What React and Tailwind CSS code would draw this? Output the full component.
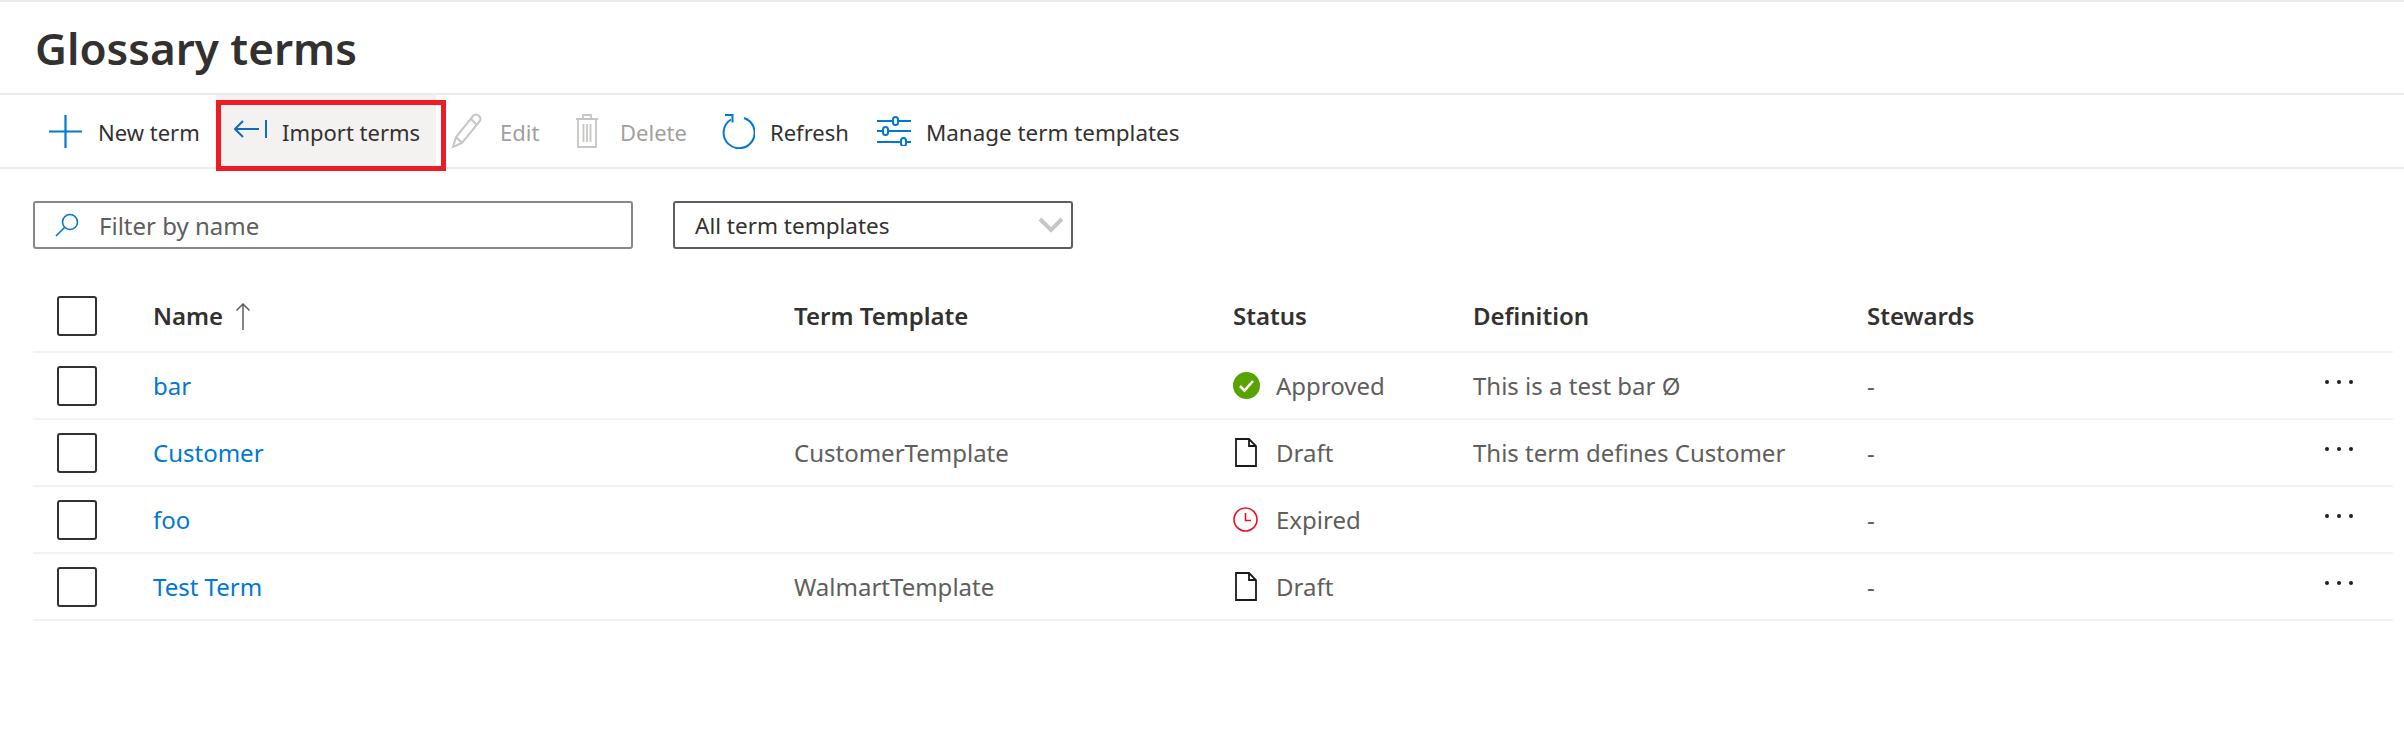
const rows = [
  { name: "bar", template: "", status: "Approved", definition: "This is a test bar Ø" },
  { name: "Customer", template: "CustomerTemplate", status: "Draft", definition: "This term defines Customer" },
  { name: "foo", template: "", status: "Expired", definition: "" },
  { name: "Test Term", template: "WalmartTemplate", status: "Draft", definition: "" },
];

const gridCols = "grid grid-cols-[120px_641px_439px_240px_394px_1fr_68px] items-center";

function PlusIcon() {
  return (
    <svg width="33" height="33" viewBox="0 0 33 33" fill="none" stroke="#0078d4" strokeWidth="2.2">
      <path d="M16.5 0v33M0 16.5h33" />
    </svg>
  );
}

function ImportIcon() {
  return (
    <svg width="33" height="22" viewBox="0 0 33 22" fill="none" stroke="#0f6cbd" strokeWidth="2" className="mb-1">
      <path d="M1 11h24M9 3l-8 8 8 8M32 2v18" />
    </svg>
  );
}

function PencilIcon() {
  return (
    <svg width="31" height="36" viewBox="0 0 31 36" fill="none" stroke="#c8c6c4" strokeWidth="2">
      <path d="M2 34l3-10L22 3c2-2 4-2 6 0s2 4 0 6L11 30z" />
      <path d="M5 24l6 6M20 6l6 6" />
    </svg>
  );
}

function TrashIcon() {
  return (
    <svg width="24" height="36" viewBox="0 0 24 36" fill="none" stroke="#c8c6c4" strokeWidth="1.8">
      <path d="M1 6h22M8 6V2h8v4M3 6v28h18V6M8.5 11v18M12 11v18M15.500 11v18" />
    </svg>
  );
}

function RefreshIcon() {
  return (
    <svg width="33" height="36" viewBox="0 0 33 36" fill="none" stroke="#0078d4" strokeWidth="2">
      <path d="M9 6.500A15.500 15.500 0 1 0 22 5" />
      <path d="M3 2h7.500v7.500" />
    </svg>
  );
}

function SlidersIcon() {
  return (
    <svg width="34" height="30" viewBox="0 0 34 30" fill="none" stroke="#0078d4" strokeWidth="2">
      <path d="M0 5h34M0 15h34M0 26h34" />
      <rect x="16" y="1" width="5" height="8" rx="2.500" fill="white" />
      <rect x="6" y="11" width="5" height="8" rx="2.500" fill="white" />
      <rect x="24" y="22" width="5" height="8" rx="2.500" fill="white" />
    </svg>
  );
}

function SearchIcon() {
  return (
    <svg width="24" height="24" viewBox="0 0 24 24" fill="none" stroke="#0078d4" strokeWidth="1.6">
      <circle cx="15" cy="9" r="7.500" />
      <path d="M9.500 14.500L1 23" />
    </svg>
  );
}

function ChevronIcon() {
  return (
    <svg width="26" height="16" viewBox="0 0 26 16" fill="none" stroke="#c8c6c4" strokeWidth="4">
      <path d="M2 2l11 11L24 2" />
    </svg>
  );
}

function SortIcon() {
  return (
    <svg width="16" height="27" viewBox="0 0 16 27" fill="none" stroke="#605e5c" strokeWidth="1.500">
      <path d="M8 1v26M1.500 7.500L8 1l6.500 6.500" />
    </svg>
  );
}

function StatusIcon({ status }) {
  if (status === "Approved") {
    return (
      <svg width="27" height="27" viewBox="0 0 27 27">
        <circle cx="13.500" cy="13.500" r="13.500" fill="#57a300" />
        <path d="M7 14l4.500 4.500L20 9" fill="none" stroke="white" strokeWidth="2.600" />
      </svg>
    );
  }
  if (status === "Expired") {
    return (
      <svg width="25" height="25" viewBox="0 0 25 25" fill="none" stroke="#e81123" strokeWidth="1.600">
        <circle cx="12.500" cy="12.500" r="11.500" />
        <path d="M12.500 6v7.500H18" />
      </svg>
    );
  }
  return (
    <svg width="22" height="29" viewBox="0 0 22 29" fill="none" stroke="#1b1a19" strokeWidth="1.800" className="ml-0.5">
      <path d="M1 1h13l7 7v20H1zM14 1v7h7" />
    </svg>
  );
}

function Checkbox() {
  return <div className="w-10 h-10 rounded-[3px] border-2 border-[#323130] bg-white"></div>;
}

function MoreDots() {
  return (
    <div className="flex gap-2 pb-2">
      <span className="w-1 h-1 rounded-full bg-[#201f1e]"></span>
      <span className="w-1 h-1 rounded-full bg-[#201f1e]"></span>
      <span className="w-1 h-1 rounded-full bg-[#201f1e]"></span>
    </div>
  );
}

function ToolButton({ icon, label, disabled, className }) {
  return (
    <div className={`flex items-center h-full whitespace-nowrap ${disabled ? "text-[#a19f9d]" : "text-[#323130]"} ${className}`}>
      {icon}
      <span className="pt-[3px]">{label}</span>
    </div>
  );
}

function App() {
  return (
    <div className="w-full h-[730px] bg-white border-t-2 border-[#edebe9] text-[24px] font-['Noto_Sans','Open_Sans',sans-serif]">
      {/* Title */}
      <div className="h-[91px] pl-[35px] flex items-center">
        <h1 className="text-[44px] font-semibold text-[#323130] leading-none">Glossary terms</h1>
      </div>

      {/* Toolbar */}
      <div className="h-[76px] pl-[33px] flex items-center border-y-2 border-[#edebe9] text-[22px]">
        <ToolButton icon={<PlusIcon />} label="New term" className="w-[183px] pl-4 gap-[16px]" />
        <div className="relative h-full w-[220px] bg-[#f3f2f1] pl-[18px] flex items-center gap-[15px] whitespace-nowrap text-[#323130]">
          <ImportIcon />
          <span className="pt-[3px]">Import terms</span>
          <div className="absolute left-0 top-[5px] w-[230px] h-[71px] border-[5px] border-[#ed1c24]"></div>
        </div>
        <ToolButton icon={<PencilIcon />} label="Edit" disabled className="w-[124px] ml-[15px] gap-[18px]" />
        <ToolButton icon={<TrashIcon />} label="Delete" disabled className="w-[147px] gap-[21px]" />
        <ToolButton icon={<RefreshIcon />} label="Refresh" className="w-[155px] gap-[15px]" />
        <ToolButton icon={<SlidersIcon />} label="Manage term templates" className="gap-[15px] text-[22.400px]" />
      </div>

      {/* Filters */}
      <div className="flex pl-[33px] pt-[32px] gap-10">
        <div className="w-[600px] h-[48px] rounded-[3px] border-2 border-[#8a8886] flex items-center pl-5 gap-[20px] text-[#605e5c]">
          <SearchIcon />
          <span className="pt-[2px]">Filter by name</span>
        </div>
        <div className="w-[400px] h-[48px] rounded-[3px] border-2 border-[#605e5c] flex items-center justify-between pl-5 pr-[7px] text-[#323130] text-[22.500px]">
          <span className="pt-[2px]">All term templates</span>
          <ChevronIcon />
        </div>
      </div>

      {/* Table */}
      <div className="mx-[33px] mt-[32px] w-[2360px]">
        <div className={`${gridCols} h-[72px] border-b-2 border-[#f3f2f1] font-semibold text-[#323130]`}>
          <div className="pl-6"><Checkbox /></div>
          <div className="flex items-center gap-3">
            <span>Name</span>
            <SortIcon />
          </div>
          <div>Term Template</div>
          <div>Status</div>
          <div>Definition</div>
          <div>Stewards</div>
          <div></div>
        </div>
        {rows.map((row) => (
          <div key={row.name} className={`${gridCols} h-[67px] border-b-2 border-[#f3f2f1] text-[#605e5c]`}>
            <div className="pl-6"><Checkbox /></div>
            <div className="text-[#0078d4]">{row.name}</div>
            <div>{row.template}</div>
            <div className="flex items-center">
              <div className="w-[43px] flex items-center"><StatusIcon status={row.status} /></div>
              <span>{row.status}</span>
            </div>
            <div>{row.definition}</div>
            <div>-</div>
            <div><MoreDots /></div>
          </div>
        ))}
      </div>
    </div>
  );
}

export default App;
